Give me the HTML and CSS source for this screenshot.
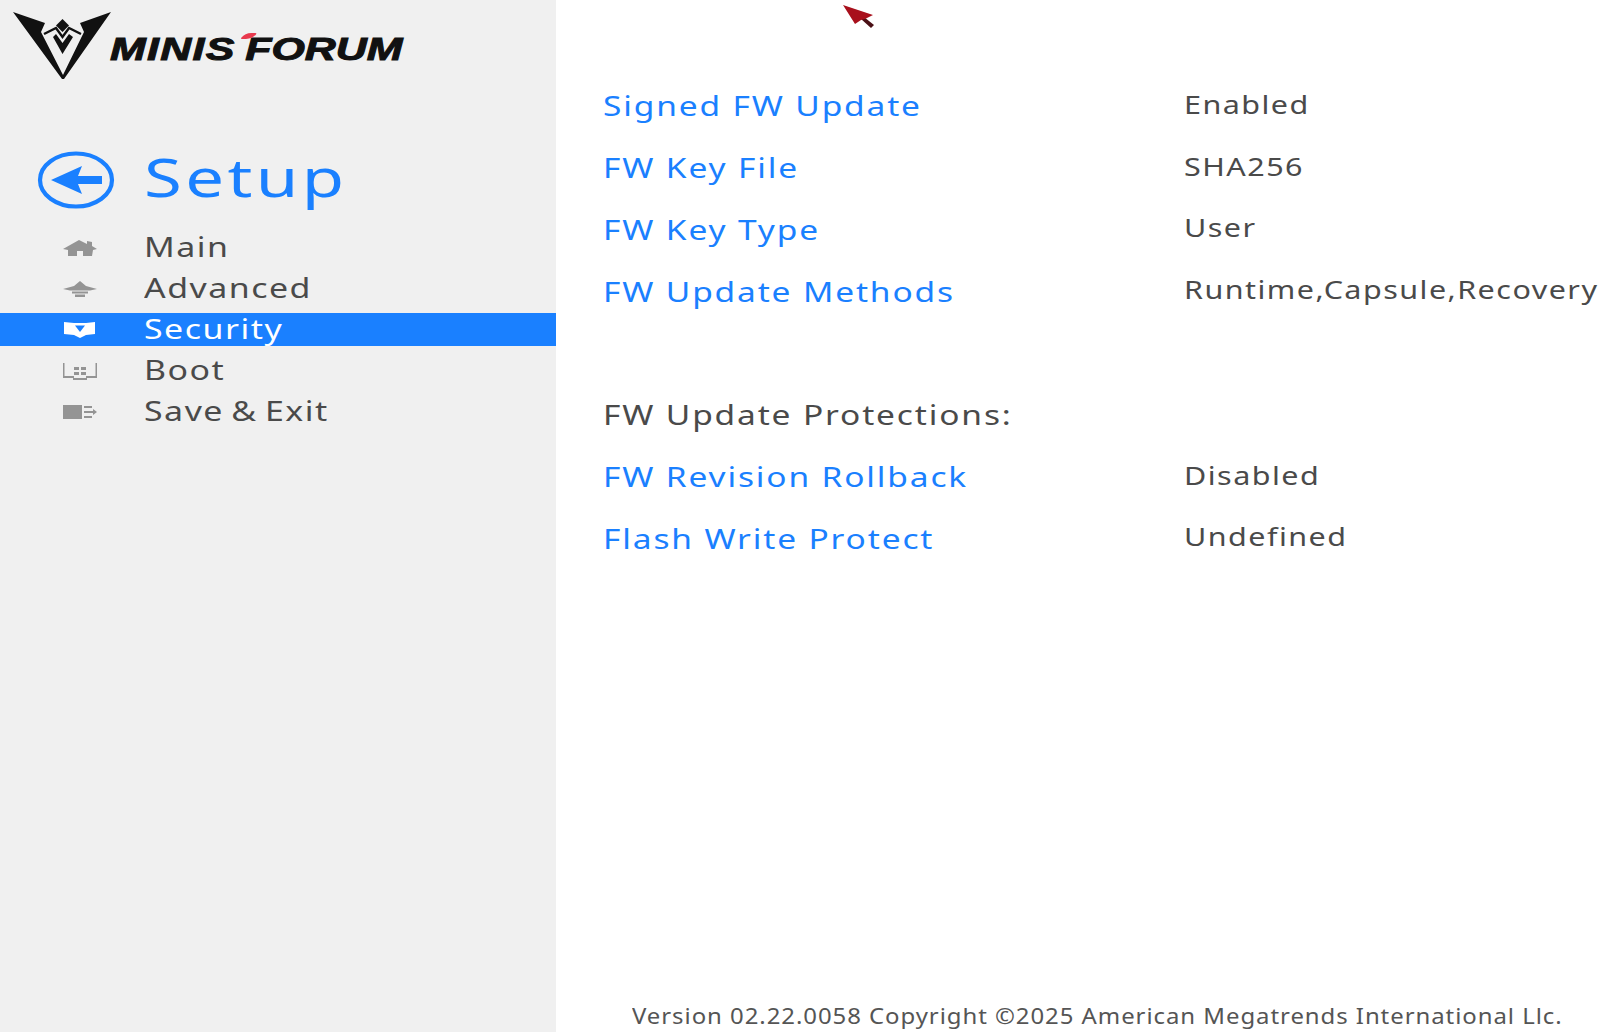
FILE: index.html
```html
<!DOCTYPE html>
<html lang="en">
<head>
<meta charset="utf-8">
<title>Setup - Security</title>
<link rel="stylesheet" href="styles.css">
</head>
<body>
<div class="page">
  <aside class="sidebar">
    <div class="logo">
      <svg class="logo-mark" width="100" height="68" viewBox="0 0 100 68" aria-hidden="true">
        <path class="ink" d="M0 0 L32 11 L28 20 L50 63 L71 20 L67 11 L98 0 L51 67 L49 67 Z"/>
        <path class="ink" d="M49.5 7 L56 13.5 L49.5 20 L43 13.5 Z"/>
        <path class="ink-line" d="M31 22 L43 16 L49.5 25 L56 16 L68 22"/>
        <path class="ink" d="M40 25 L43 22 L49.5 31 L56 22 L60 25 L49.5 42 Z"/>
      </svg>
      <div class="logo-word"><span class="logo-minis">MINIS</span><span class="logo-forum">FORUM</span><i class="logo-flash"></i></div>
    </div>
    <div class="setup">
      <svg class="back" width="78" height="58" viewBox="0 0 78 58" aria-hidden="true">
        <ellipse cx="39" cy="29" rx="36" ry="26.5" fill="none" stroke="#1a80ff" stroke-width="4.2"/>
        <path d="M14 29 L45 15 L41 25 L65 25 L65 33 L41 33 L45 43 Z" fill="#1a80ff"/>
      </svg>
      <h1 class="setup-title">Setup</h1>
    </div>
    <nav class="nav">
      <div class="nav-item">
        <svg class="nav-icon" width="36" height="18" viewBox="0 0 36 18" aria-hidden="true"><path class="ic" d="M1 10 L17 1 L25 5 L25 2 L30 3 L30 7 L35 10 L31 11 L30 17 L21 17 L21 12 L15 12 L15 17 L6 17 L6 11 Z"/></svg>
        <span>Main</span>
      </div>
      <div class="nav-item">
        <svg class="nav-icon" width="36" height="18" viewBox="0 0 36 18" aria-hidden="true"><path class="ic" d="M1 9 L12 6 L18 1 L24 6 L35 9 L28 10.5 L8 10.5 Z"/><path class="ic" d="M10 11.5 H26 V13.5 H10 Z M13 14.5 H23 V17 H13 Z"/></svg>
        <span>Advanced</span>
      </div>
      <div class="nav-item is-active">
        <svg class="nav-icon" width="36" height="18" viewBox="0 0 36 18" aria-hidden="true"><path fill="#fff" d="M2 1 L12 2 H24 L33 1 V13 L24 14 L18 17 L12 14 L2 13 Z"/><path fill="#1a80ff" d="M13 4.5 H23 L18 11 Z"/></svg>
        <span>Security</span>
      </div>
      <div class="nav-item">
        <svg class="nav-icon" width="36" height="18" viewBox="0 0 36 18" aria-hidden="true"><path class="ic" d="M1 1 H2.5 V14 H12 V16 H24 V14 H33.5 V1 H35 V16 H25 V18 H11 V16 H1 Z"/><path class="ic" d="M12 5 H17 V8 H12 Z M19 5 H24 V8 H19 Z M12 10 H17 V13 H12 Z M19 10 H24 V13 H19 Z"/></svg>
        <span>Boot</span>
      </div>
      <div class="nav-item">
        <svg class="nav-icon" width="36" height="18" viewBox="0 0 36 18" aria-hidden="true"><path class="ic" d="M1 2 H20 V16 H1 Z"/><path class="ic" d="M22 3 H30 V5 H22 Z M22 8 H31 V6 L35 9 L31 12 V10 H22 Z M22 13 H30 V15 H22 Z"/></svg>
        <span>Save &amp; Exit</span>
      </div>
    </nav>
  </aside>
  <main class="main">
    <div class="rows">
      <div class="row"><span class="label">Signed FW Update</span><span class="value">Enabled</span></div>
      <div class="row"><span class="label">FW Key File</span><span class="value">SHA256</span></div>
      <div class="row"><span class="label">FW Key Type</span><span class="value">User</span></div>
      <div class="row"><span class="label">FW Update Methods</span><span class="value">Runtime,Capsule,Recovery</span></div>
      <div class="row"></div>
      <div class="row"><span class="label label-plain">FW Update Protections:</span></div>
      <div class="row"><span class="label">FW Revision Rollback</span><span class="value">Disabled</span></div>
      <div class="row"><span class="label">Flash Write Protect</span><span class="value">Undefined</span></div>
    </div>
    <footer class="footer"><span class="footer-text">Version 02.22.0058 Copyright ©2025 American Megatrends International Llc.</span></footer>
    <svg class="cursor" width="32" height="24" viewBox="0 0 32 24" aria-hidden="true"><path d="M18 14 L21 12 L31 20 L28 23 Z" fill="#4a1015"/><path d="M0 0 L30 10 L22 14 L18 15 L12 19 Z" fill="#a8101c"/></svg>
  </main>
</div>
</body>
</html>
```

FILE: styles.css
```css
* { box-sizing: border-box; }
html, body { margin: 0; height: 100%; background: #fff; overflow: hidden; }
body { font-family: "Noto Sans", "Open Sans", sans-serif; color: #4a4a4a; }

.page { display: flex; width: 1608px; height: 1032px; }

.sidebar { width: 556px; flex: none; background: #f0f0f0; }

.logo { display: flex; align-items: flex-start; height: 137px; padding: 12px 0 0 13px; }
.logo-mark { flex: none; }
.ink { fill: #111; }
.ink-line { fill: none; stroke: #111; stroke-width: 2.4; }
.logo-word { position: relative; display: flex; gap: 7px; margin: 22px 0 0 -3px; font-family: "Liberation Sans", sans-serif; font-weight: 700; font-style: italic; font-size: 32px; line-height: 30px; color: #111; -webkit-text-stroke: 1px #111; transform: scaleX(1.34); transform-origin: 0 50%; }
.logo-minis { letter-spacing: 1px; }
.logo-flash { position: absolute; left: 99px; top: -1px; width: 9px; height: 6px; background: #e8394d; border-radius: 8px 2px 8px 2px; transform: skewX(-30deg); }

.setup { display: flex; align-items: center; height: 86px; padding-left: 37px; }
.back { flex: none; }
.setup-title { margin: 0 0 0 29px; padding-bottom: 6px; font-weight: 420; font-size: 53px; line-height: 60px; letter-spacing: 2.6px; color: #1a80ff; transform: scaleX(1.3); transform-origin: 0 50%; }

.nav { display: flex; flex-direction: column; margin-top: 4px; }
.nav-item { display: flex; align-items: center; height: 41px; padding-left: 62px; font-size: 28px; color: #4a4a4a; }
.nav-item span { margin-left: 46px; padding-bottom: 3px; font-weight: 450; letter-spacing: 1.25px; word-spacing: -2.5px; transform: scaleX(1.21); transform-origin: 0 50%; white-space: nowrap; }
.nav-item.is-active { height: 33px; margin: 4px 0; background: #1a80ff; color: #fff; }
.nav-icon { flex: none; }
.ic { fill: #949494; }

.main { position: relative; flex: 1; display: flex; flex-direction: column; }
.rows { padding: 75px 0 0 47px; }
.row { display: flex; align-items: center; height: 61.8px; }
.label { width: 581px; flex: none; font-size: 27px; font-weight: 450; letter-spacing: 1.5px; color: #1a80ff; transform: scaleX(1.24); transform-origin: 0 50%; white-space: nowrap; }
.label-plain { color: #4a4a4a; }
.value { font-size: 25px; font-weight: 450; letter-spacing: 1.2px; color: #4a4a4a; margin-top: -4px; white-space: nowrap; transform: scaleX(1.22); transform-origin: 0 50%; }

.footer { margin-top: auto; padding: 0 0 1px 76px; font-size: 21px; line-height: 30px; color: #555; white-space: nowrap; }
.footer-text { display: inline-block; letter-spacing: 0.83px; transform: scaleX(1.14); transform-origin: 0 50%; }

.cursor { position: absolute; left: 287px; top: 5px; }
```
